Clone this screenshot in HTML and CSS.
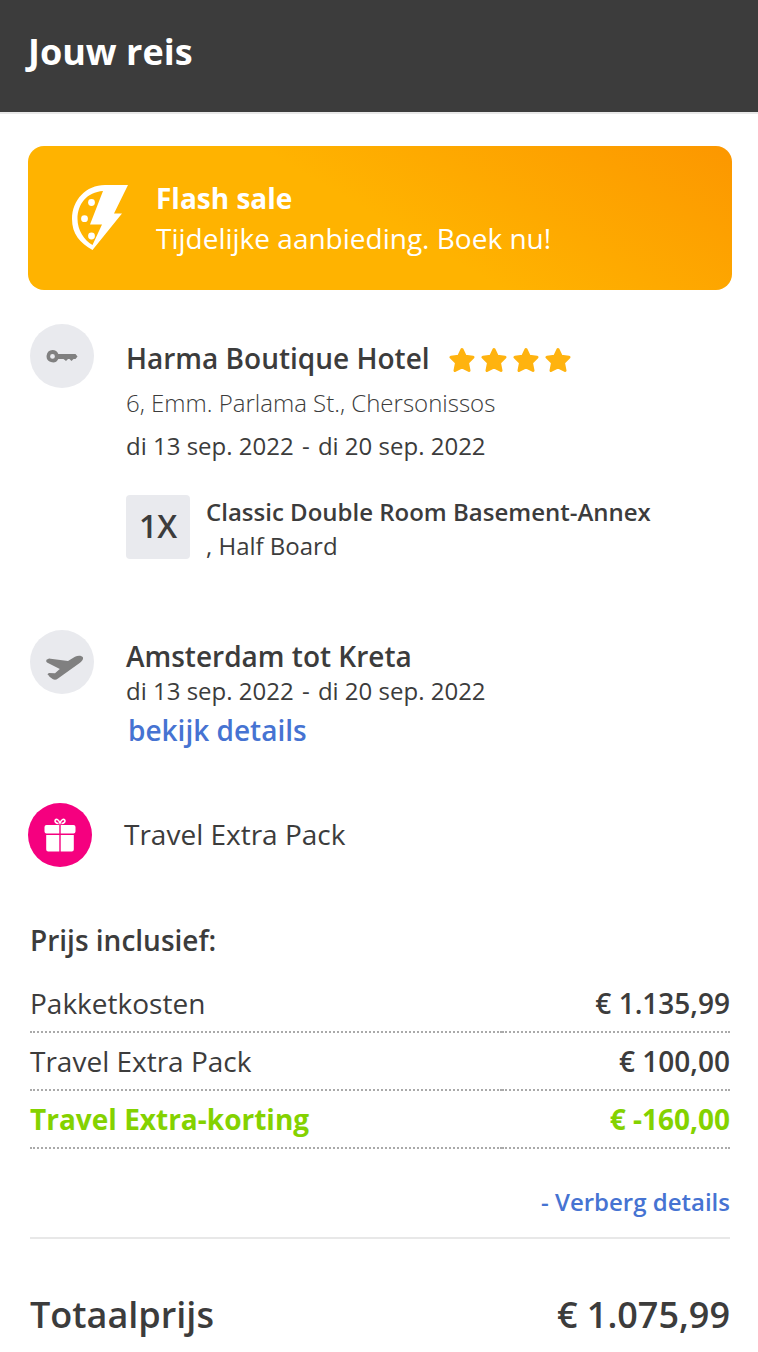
FILE: index.html
```html
<!DOCTYPE html>
<html lang="nl">
<head>
    <meta charset="UTF-8">
    <meta name="viewport" content="width=device-width, initial-scale=1.0">
    <title>Jouw reis</title>
    <link rel="stylesheet" href="styles.css">
</head>
<body>
    <!-- Header -->
    <header class="trip-header">
        <h1>Jouw reis</h1>
    </header>

    <main class="trip">
        <!-- Flash sale banner -->
        <section class="flash-sale">
            <svg class="flash-icon" viewBox="0 0 56 66" aria-hidden="true">
                <path fill="#fff" fill-rule="evenodd" d="M33 0H56L42 28.500H50L20.500 65C8 58 0 49 0 34C0 15 14 0 33 0ZM31 6C15 7 5.500 19 5.500 34C5.500 45 12 55 20.500 60L30 39.500H18Z"/>
                <circle cx="19.500" cy="17.500" r="3.400" fill="#fff"/>
                <circle cx="12.500" cy="33.700" r="3.400" fill="#fff"/>
                <circle cx="19.500" cy="51" r="3.400" fill="#fff"/>
            </svg>
            <div class="flash-text">
                <strong>Flash sale</strong>
                <p>Tijdelijke aanbieding. Boek nu!</p>
            </div>
        </section>

        <!-- Hotel -->
        <section class="item hotel">
            <div class="circle">
                <svg width="32" height="16" viewBox="0 0 32 16" aria-hidden="true">
                    <path fill="#808080" fill-rule="evenodd" d="M6.500 2A6.200 6.200 0 0 1 12.300 6H29.500L31.500 8.500L29.500 11H27.500L25.500 13L23.500 11H22L20 13L17.500 11H12.300A6.200 6.200 0 1 1 6.500 2ZM6.500 6A2.400 2.400 0 1 0 6.500 10.800A2.400 2.400 0 0 0 6.500 6Z"/>
                </svg>
            </div>
            <div class="item-body">
                <div class="hotel-title">
                    <h2>Harma Boutique Hotel</h2>
                    <div class="stars" role="img" aria-label="4 sterren">
                        <svg viewBox="0 0 26 26"><path d="M13 2.500L16.300 9.300L24 10.200L18.500 15.700L20 23.500L13 20L6 23.500L7.500 15.700L2 10.200L9.700 9.300Z"/></svg>
                        <svg viewBox="0 0 26 26"><path d="M13 2.500L16.300 9.300L24 10.200L18.500 15.700L20 23.500L13 20L6 23.500L7.500 15.700L2 10.200L9.700 9.300Z"/></svg>
                        <svg viewBox="0 0 26 26"><path d="M13 2.500L16.300 9.300L24 10.200L18.500 15.700L20 23.500L13 20L6 23.500L7.500 15.700L2 10.200L9.700 9.300Z"/></svg>
                        <svg viewBox="0 0 26 26"><path d="M13 2.500L16.300 9.300L24 10.200L18.500 15.700L20 23.500L13 20L6 23.500L7.500 15.700L2 10.200L9.700 9.300Z"/></svg>
                    </div>
                </div>
                <p class="address">6, Emm. Parlama St., Chersonissos</p>
                <p class="dates">di 13 sep. 2022 <span class="dash">-</span> di 20 sep. 2022</p>
                <div class="room">
                    <div class="room-count">1X</div>
                    <div class="room-text">
                        <strong>Classic Double Room Basement-Annex</strong>
                        <p>, Half Board</p>
                    </div>
                </div>
            </div>
        </section>

        <!-- Flight -->
        <section class="item flight">
            <div class="circle">
                <svg width="64" height="64" viewBox="-16 -26 64 64" aria-hidden="true">
                    <path fill="#808080" d="M.5 3.800L2.500 2.800Q3.300 2.400 4.500 2.700L22 5L29 .8C32 -.8 36 -.5 37 1.500C37.400 3.500 36 5.300 34 6.800L12 22.500Q9.500 24.500 7 23.300L3.500 20.800Q3 19 1.600 18.700Q1.500 17.500 3 17L9 17.300L13.800 13L1 6.500Q-.5 5.200 .5 3.800Z"/>
                </svg>
            </div>
            <div class="item-body">
                <h2>Amsterdam tot Kreta</h2>
                <p class="dates">di 13 sep. 2022 <span class="dash">-</span> di 20 sep. 2022</p>
                <a class="details-link" href="#">bekijk details</a>
            </div>
        </section>

        <!-- Extra pack -->
        <section class="extra">
            <div class="circle pink">
                <svg width="32" height="34" viewBox="0 0 32 34" aria-hidden="true">
                    <path fill="none" stroke="#fff" stroke-width="1.600" d="M14.500 5.500C12 5.500 10.500 3.700 11.300 2C12.500 .6 14.500 1.500 16 5C17.500 1.500 19.500 .6 20.700 2C21.500 3.700 20 5.500 17.500 5.500"/>
                    <path fill="#fff" d="M2.500 7H15.300V15.500H2.500Q.5 15.500 .5 13.500V9Q.5 7 2.500 7ZM16.700 7H29.500Q31.500 7 31.500 9V13.500Q31.500 15.500 29.500 15.500H16.700ZM2.200 17H15.300V33.500H4.200Q2.200 33.500 2.200 31.500ZM16.700 17H29.800V31.500Q29.800 33.500 27.800 33.500H16.700Z"/>
                </svg>
            </div>
            <p>Travel Extra Pack</p>
        </section>

        <!-- Price breakdown -->
        <section class="prices">
            <h2>Prijs inclusief:</h2>
            <table class="price-table">
                <tbody>
                    <tr>
                        <th scope="row">Pakketkosten</th>
                        <td>€ 1.135,99</td>
                    </tr>
                    <tr>
                        <th scope="row">Travel Extra Pack</th>
                        <td>€ 100,00</td>
                    </tr>
                    <tr class="discount">
                        <th scope="row">Travel Extra-korting</th>
                        <td>€ -160,00</td>
                    </tr>
                </tbody>
            </table>
            <div class="toggle-row">
                <a href="#">- Verberg details</a>
            </div>
            <div class="total">
                <span>Totaalprijs</span>
                <span>€ 1.075,99</span>
            </div>
        </section>
    </main>
</body>
</html>
```

FILE: styles.css
```css
/* General Styles */
* {
    box-sizing: border-box;
}

body {
    margin: 0;
    font-family: 'Open Sans', sans-serif;
    font-size: 28px;
    line-height: 40px;
    color: #3c3c3c;
    background-color: #fff;
}

h1, h2, p {
    margin: 0;
}

h2 {
    font-size: 28px;
    font-weight: 600;
}

a {
    color: #4673d2;
    font-weight: 600;
    text-decoration: none;
}

svg {
    display: block;
}

/* Header */
.trip-header {
    padding: 28px 28px 36px;
    background-color: #3c3c3c;
    border-bottom: 2px solid #e8e8e8;
    color: #fff;
}

.trip-header h1 {
    font-size: 36px;
    font-weight: 700;
    line-height: 48px;
}

.trip {
    padding: 32px 26px 12px 28px;
}

/* Flash sale banner */
.flash-sale {
    display: flex;
    align-items: center;
    gap: 28px;
    padding: 32px 44px;
    border-radius: 16px;
    background: linear-gradient(30deg, #ffb300 50%, #fc9700);
    color: #fff;
}

.flash-icon {
    width: 56px;
    height: 66px;
}

.flash-text strong {
    font-weight: 700;
}

/* Trip items */
.item {
    display: flex;
    gap: 32px;
    padding: 0 2px;
}

.item-body {
    flex: 1;
}

.circle {
    display: flex;
    flex: none;
    justify-content: center;
    align-items: center;
    width: 64px;
    height: 64px;
    border-radius: 50%;
    background-color: #e9eaee;
}

.hotel {
    margin-top: 34px;
}

.hotel .item-body {
    padding-top: 14px;
}

.hotel-title {
    display: flex;
    align-items: center;
    gap: 19px;
}

.stars {
    display: flex;
    gap: 6px;
    padding-top: 4px;
}

.stars svg {
    width: 26px;
    height: 26px;
    fill: #ffb30f;
    stroke: #ffb30f;
    stroke-width: 3;
    stroke-linejoin: round;
}

.address,
.dates {
    font-size: 24px;
}

.address {
    margin-top: 5px;
    font-weight: 300;
}

.dates {
    margin-top: 3px;
}

.dash {
    margin: 0 2px;
}

.room {
    display: flex;
    gap: 16px;
    margin-top: 29px;
}

.room-count {
    width: 64px;
    height: 64px;
    border-radius: 4px;
    background-color: #e9eaee;
    font-size: 32px;
    font-weight: 600;
    line-height: 62px;
    text-align: center;
}

.room-text {
    font-size: 24px;
    line-height: 34px;
}

.room-text strong {
    font-weight: 600;
}

.flight {
    margin-top: 67px;
}

.flight .item-body {
    padding-top: 6px;
}

.flight .dates {
    margin-top: 0;
    line-height: 30px;
}

.details-link {
    display: inline-block;
    margin-top: 4px;
    padding-left: 2px;
}

.extra {
    display: flex;
    align-items: center;
    gap: 32px;
    margin-top: 53px;
}

.extra p {
    padding-bottom: 2px;
}

.circle.pink {
    background-color: #f5007f;
}

/* Prices */
.prices {
    margin-top: 53px;
    padding: 0 2px;
}

.price-table {
    width: 100%;
    margin-top: 15px;
    border-collapse: collapse;
}

.price-table tr {
    border-bottom: 2px dotted #aaa;
}

.price-table th,
.price-table td {
    padding: 8px 0;
    font-weight: 400;
    text-align: left;
}

.price-table td {
    font-weight: 600;
    text-align: right;
}

.price-table .discount th,
.price-table .discount td {
    color: #84d200;
    font-weight: 700;
}

.toggle-row {
    padding: 33px 0 15px;
    border-bottom: 2px solid #e8e8e8;
    font-size: 24px;
    text-align: right;
}

.total {
    display: flex;
    justify-content: space-between;
    padding-top: 52px;
    font-size: 36px;
    font-weight: 600;
    line-height: 48px;
}
```
